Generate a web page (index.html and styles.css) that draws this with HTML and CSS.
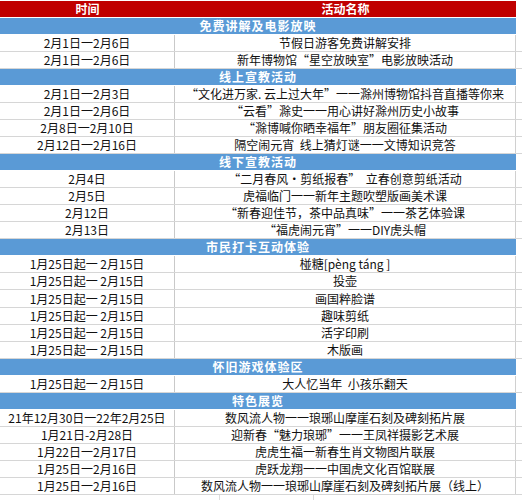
FILE: index.html
```html
<!DOCTYPE html>
<html lang="zh-CN">
<head>
<meta charset="utf-8">
<link rel="stylesheet" href="styles.css">
</head>
<body>
<div class="sheet">
  <div class="row head"><div class="c1">时间</div><div class="c2">活动名称</div></div>
  <div class="row sec"><div class="span">免费讲解及电影放映</div></div>
  <div class="row"><div class="c1">2月1日一2月6日</div><div class="c2">节假日游客免费讲解安排</div></div>
  <div class="row"><div class="c1">2月1日一2月6日</div><div class="c2">新年博物馆“星空放映室”电影放映活动</div></div>
  <div class="row sec"><div class="span">线上宣教活动</div></div>
  <div class="row"><div class="c1">2月1日一2月3日</div><div class="c2">“文化进万家. 云上过大年”一一滁州博物馆抖音直播等你来</div></div>
  <div class="row"><div class="c1">2月1日一2月6日</div><div class="c2">“云看”滁史一一用心讲好滁州历史小故事</div></div>
  <div class="row"><div class="c1">2月8日一2月10日</div><div class="c2">“滁博喊你晒幸福年”朋友圈征集活动</div></div>
  <div class="row"><div class="c1">2月12日一2月16日</div><div class="c2">隔空闹元宵&nbsp;&nbsp;线上猜灯谜一一文博知识竞答</div></div>
  <div class="row sec"><div class="span">线下宣教活动</div></div>
  <div class="row"><div class="c1">2月4日</div><div class="c2">“二月春风·剪纸报春”&nbsp;&nbsp;立春创意剪纸活动</div></div>
  <div class="row"><div class="c1">2月5日</div><div class="c2">虎福临门一一新年主题吹塑版画美术课</div></div>
  <div class="row"><div class="c1">2月12日</div><div class="c2">“新春迎佳节，茶中品真味”一一茶艺体验课</div></div>
  <div class="row"><div class="c1">2月13日</div><div class="c2">“福虎闹元宵”一一DIY虎头帽</div></div>
  <div class="row sec"><div class="span">市民打卡互动体验</div></div>
  <div class="row"><div class="c1">1月25日起一&nbsp;2月15日</div><div class="c2">椪糖[pèng táng ]</div></div>
  <div class="row"><div class="c1">1月25日起一&nbsp;2月15日</div><div class="c2">投壶</div></div>
  <div class="row tall"><div class="c1">1月25日起一&nbsp;2月15日</div><div class="c2">画国粹脸谱</div></div>
  <div class="row"><div class="c1">1月25日起一&nbsp;2月15日</div><div class="c2">趣味剪纸</div></div>
  <div class="row"><div class="c1">1月25日起一&nbsp;2月15日</div><div class="c2">活字印刷</div></div>
  <div class="row"><div class="c1">1月25日起一&nbsp;2月15日</div><div class="c2">木版画</div></div>
  <div class="row sec"><div class="span">怀旧游戏体验区</div></div>
  <div class="row"><div class="c1">1月25日起一&nbsp;2月15日</div><div class="c2">大人忆当年&nbsp;&nbsp;小孩乐翻天</div></div>
  <div class="row sec"><div class="span">特色展览</div></div>
  <div class="row"><div class="c1">21年12月30日一22年2月25日</div><div class="c2">数风流人物一一琅琊山摩崖石刻及碑刻拓片展</div></div>
  <div class="row"><div class="c1">1月21日-2月28日</div><div class="c2">迎新春“魅力琅琊”一一王凤祥摄影艺术展</div></div>
  <div class="row"><div class="c1">1月22日一2月17日</div><div class="c2">虎虎生福一新春生肖文物图片联展</div></div>
  <div class="row"><div class="c1">1月25日一2月16日</div><div class="c2">虎跃龙翔一一中国虎文化百馆联展</div></div>
  <div class="row"><div class="c1">1月25日一2月16日</div><div class="c2">数风流人物一一琅琊山摩崖石刻及碑刻拓片展（线上）</div></div>
  <div class="row empty"><div class="e1"></div><div class="e2"></div><div class="e3"></div></div>
</div>
</body>
</html>
```

FILE: styles.css
```css
html, body {
  margin: 0;
  padding: 0;
  background: #ffffff;
}
body {
  font-family: "Noto Sans CJK SC", "Liberation Sans", sans-serif;
  font-size: 12px;
  color: #111111;
  width: 522px;
  overflow: hidden;
}
.sheet {
  width: 522px;
  padding-top: 1px;
  background: #ffffff;
}
.row {
  display: grid;
  grid-template-columns: 175px 341px 6px;
  height: 17px;
  border-bottom: 1px solid #d6d6d6;
  box-sizing: border-box;
  line-height: 16px;
}
.row.tall {
  height: 18px;
  line-height: 17px;
}
.c1, .c2 {
  text-align: center;
  white-space: nowrap;
  overflow: hidden;
}
.c1 {
  border-right: 1px solid #c9c9c9;
}
.c2 {
  border-right: 1px solid #d0d0d0;
}
.head {
  border-bottom: 1px solid #ffffff;
}
.head .c1, .head .c2 {
  background: #c00000;
  color: #ffffff;
  font-weight: bold;
  border-right: none;
}
.sec {
  border-bottom: 1px solid #ffffff;
}
.sec .span {
  grid-column: 1 / 3;
  background: #5a9ad6;
  color: #ffffff;
  font-weight: bold;
  text-align: center;
  letter-spacing: 1px;
}
.empty {
  grid-template-columns: 220px 94px 208px;
  border-bottom: none;
}
.e1, .e2 {
  border-right: 1px solid #dcdcdc;
}
```
